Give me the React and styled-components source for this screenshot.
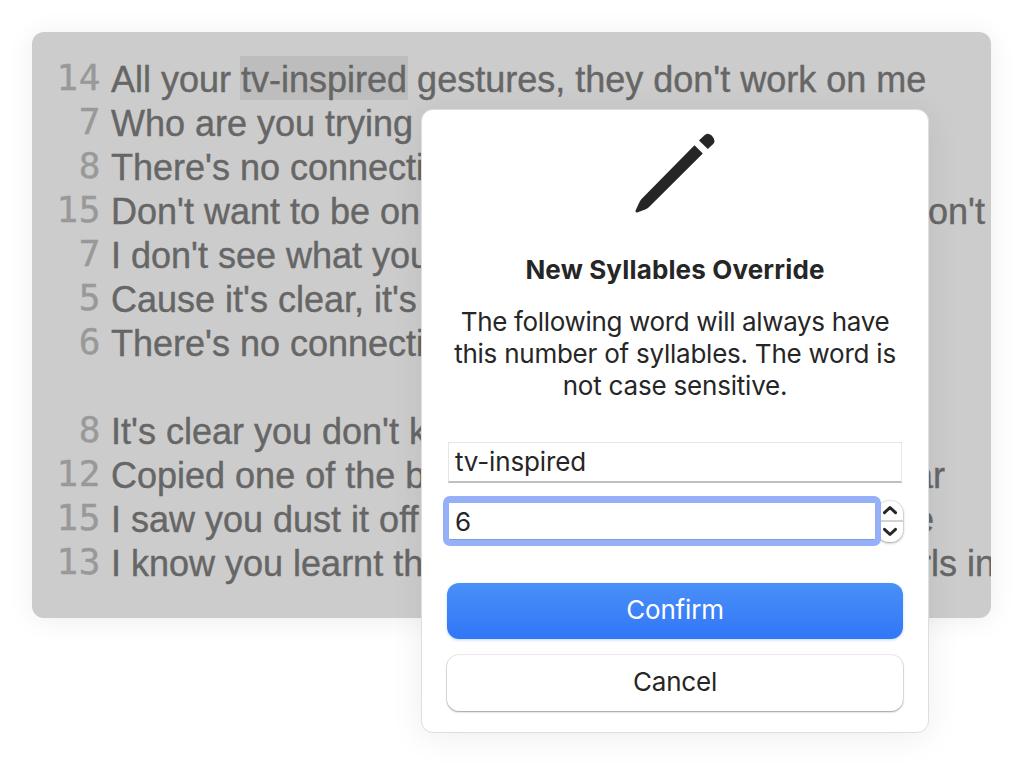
import React from "react";
import styled, { createGlobalStyle } from "styled-components";

const GlobalStyle = createGlobalStyle`
  * { box-sizing: border-box; }
  body { margin: 0; background: #fff; overflow: hidden; -webkit-font-smoothing: antialiased; }
`;

const Page = styled.main`
  position: relative;
  width: 1023px;
  height: 765px;
  padding: 32px;
  overflow: hidden;
  background: #fff;
`;

const Editor = styled.section`
  width: 959px;
  height: 586px;
  padding-top: 24px;
  border-radius: 12px;
  overflow: hidden;
  background: #cccccc;
  box-shadow: 0 2px 28px rgba(0, 0, 0, 0.07);
`;

const LyricRow = styled.div`
  display: flex;
  height: 44px;
  line-height: 44px;
  white-space: pre;
  font-size: 36px;
`;

const Count = styled.span`
  flex: none;
  width: 69px;
  margin-right: 10px;
  text-align: right;
  line-height: 43px;
  font-family: "DejaVu Sans Mono", monospace;
  letter-spacing: 0.6px;
  -webkit-text-stroke: 0.4px #999;
  color: #999;
`;

const Lyric = styled.span`
  flex: none;
  padding-top: 2px;
  height: 44px;
  font-family: "Liberation Sans", Arial, sans-serif;
  -webkit-text-stroke: 0.4px #666;
  color: #666;
`;

const Tail = styled(Lyric)`
  margin-left: auto;
  margin-right: ${(p) => p.$end}px;
`;

const Highlight = styled.mark`
  display: inline-block;
  height: 44px;
  margin: -2px -1px 0;
  padding: 2px 1px 0;
  vertical-align: top;
  background: #bdbdbd;
  color: inherit;
`;

const Dialog = styled.section`
  position: absolute;
  left: 421px;
  top: 109px;
  width: 508px;
  height: 624px;
  display: flex;
  flex-direction: column;
  align-items: center;
  padding: 23px 25px 0;
  border: 1px solid #dedede;
  border-radius: 12px;
  background: #fff;
  box-shadow: 0 4px 34px rgba(0, 0, 0, 0.07);
  font-family: Inter, sans-serif;
  font-size: 26px;
  color: #262626;
`;

const Pencil = styled.svg`
  flex: none;
  width: 80px;
  height: 80px;
`;

const Title = styled.h1`
  margin: 41px 0 0;
  font-size: 26px;
  line-height: 32px;
  font-weight: 700;
  letter-spacing: 0.15px;
  white-space: nowrap;
`;

const Message = styled.p`
  display: flex;
  flex-direction: column;
  align-items: center;
  margin: 20px 0 0;
  line-height: 32px;
`;

const MessageLine = styled.span`
  white-space: nowrap;
  letter-spacing: ${(p) => p.$track}px;
`;

const WordField = styled.div`
  width: 454px;
  height: 41px;
  margin-top: 40px;
  padding-left: 6px;
  border: 1px solid #e6e6e6;
  border-bottom: 2px solid #bfbfbf;
  line-height: 38px;
  letter-spacing: -0.15px;
`;

const CountRow = styled.div`
  display: flex;
  align-items: center;
  width: 464px;
  height: 50px;
  margin: 13px 0 0;
`;

const CountField = styled.div`
  position: relative;
  z-index: 1;
  width: 438px;
  height: 50px;
  padding-left: 6px;
  border: 6px solid #95b0f6;
  border-top-width: 7px;
  border-radius: 7px;
  background: #fff;
  box-shadow: inset 0 -1px 0 #7e9be2;
  line-height: 37px;
`;

const Stepper = styled.div`
  display: flex;
  flex-direction: column;
  width: 26px;
  height: 41px;
  margin-left: -4px;
  border-radius: 12px;
  background: #fff;
  box-shadow: 0 0 0 1px rgba(0, 0, 0, 0.06), 0 1px 3px rgba(0, 0, 0, 0.34);
`;

const Step = styled.div`
  flex: 1;
  display: flex;
  align-items: center;
  justify-content: center;

  & + & { border-top: 2px solid #d2d2d2; }
`;

const Button = styled.button`
  flex: none;
  width: 456px;
  height: 56px;
  margin-top: ${(p) => p.$gap}px;
  padding: 0 0 3px;
  border: 0;
  border-radius: 12px;
  font: inherit;
  letter-spacing: -0.2px;
  color: ${(p) => (p.$primary ? "#fff" : "#262626")};
  background: ${(p) => (p.$primary ? "linear-gradient(#4a90f8, #3176f6)" : "#fff")};
  box-shadow: ${(p) =>
    p.$primary
      ? "0 1px 3px rgba(49, 118, 246, 0.3)"
      : "0 0 0 1px rgba(0, 0, 0, 0.07), 0 1px 2px rgba(0, 0, 0, 0.34)"};
`;

const lyrics = [
  { n: 14, parts: ["All your ", "tv-inspired", " gestures, they don't work on me"] },
  { n: 7, text: "Who are you trying" },
  { n: 8, text: "There's no connection" },
  { n: 15, text: "Don't want to be on", tail: "don't", end: 6 },
  { n: 7, text: "I don't see what you" },
  { n: 5, text: "Cause it's clear, it's" },
  { n: 6, text: "There's no connection" },
  { n: "", text: "" },
  { n: 8, text: "It's clear you don't k" },
  { n: 12, text: "Copied one of the b", tail: "ar", end: 46 },
  { n: 15, text: "I saw you dust it off", tail: "e", end: 57 },
  { n: 13, text: "I know you learnt th", tail: "girls in", end: -4 },
];

const Chevron = ({ up }) => (
  <svg width="16" height="10" viewBox="0 0 16 10" fill="none" stroke="#262626" strokeWidth="3" strokeLinecap="round" strokeLinejoin="round">
    <path d={up ? "M2.5 7.7 8 2.5 13.5 7.7" : "M2.5 2.3 8 7.5 13.5 2.3"} />
  </svg>
);

export default function App() {
  return (
    <Page>
      <GlobalStyle />
      <Editor>
        {lyrics.map((row, i) => (
          <LyricRow key={i}>
            <Count>{row.n}</Count>
            <Lyric>
              {row.parts ? (
                <>
                  {row.parts[0]}
                  <Highlight>{row.parts[1]}</Highlight>
                  {row.parts[2]}
                </>
              ) : (
                row.text
              )}
            </Lyric>
            {row.tail && <Tail $end={row.end}>{row.tail}</Tail>}
          </LyricRow>
        ))}
      </Editor>
      <Dialog>
        <Pencil viewBox="0 0 80 80" fill="#262626">
          <path d="M59.5 12.2 67.8 20.5 13.8 74.3 Q12 75.9 9.5 76.8 L2.8 79.3 Q0 80.2.7 77.2 L4.4 69.3 Q5 67.6 6.5 65.9Z" />
          <path d="M64 7.4 69.2 2.4Q72.7-.9 76.6 2.6 81.5 7.4 78.2 11L72.8 16.1Z" />
        </Pencil>
        <Title>New Syllables Override</Title>
        <Message>
          <MessageLine $track={-0.34}>The following word will always have</MessageLine>
          <MessageLine $track={-0.24}>this number of syllables. The word is</MessageLine>
          <MessageLine $track={-0.2}>not case sensitive.</MessageLine>
        </Message>
        <WordField>tv-inspired</WordField>
        <CountRow>
          <CountField>6</CountField>
          <Stepper>
            <Step><Chevron up /></Step>
            <Step><Chevron /></Step>
          </Stepper>
        </CountRow>
        <Button $primary $gap={37}>Confirm</Button>
        <Button $gap={16}>Cancel</Button>
      </Dialog>
    </Page>
  );
}
